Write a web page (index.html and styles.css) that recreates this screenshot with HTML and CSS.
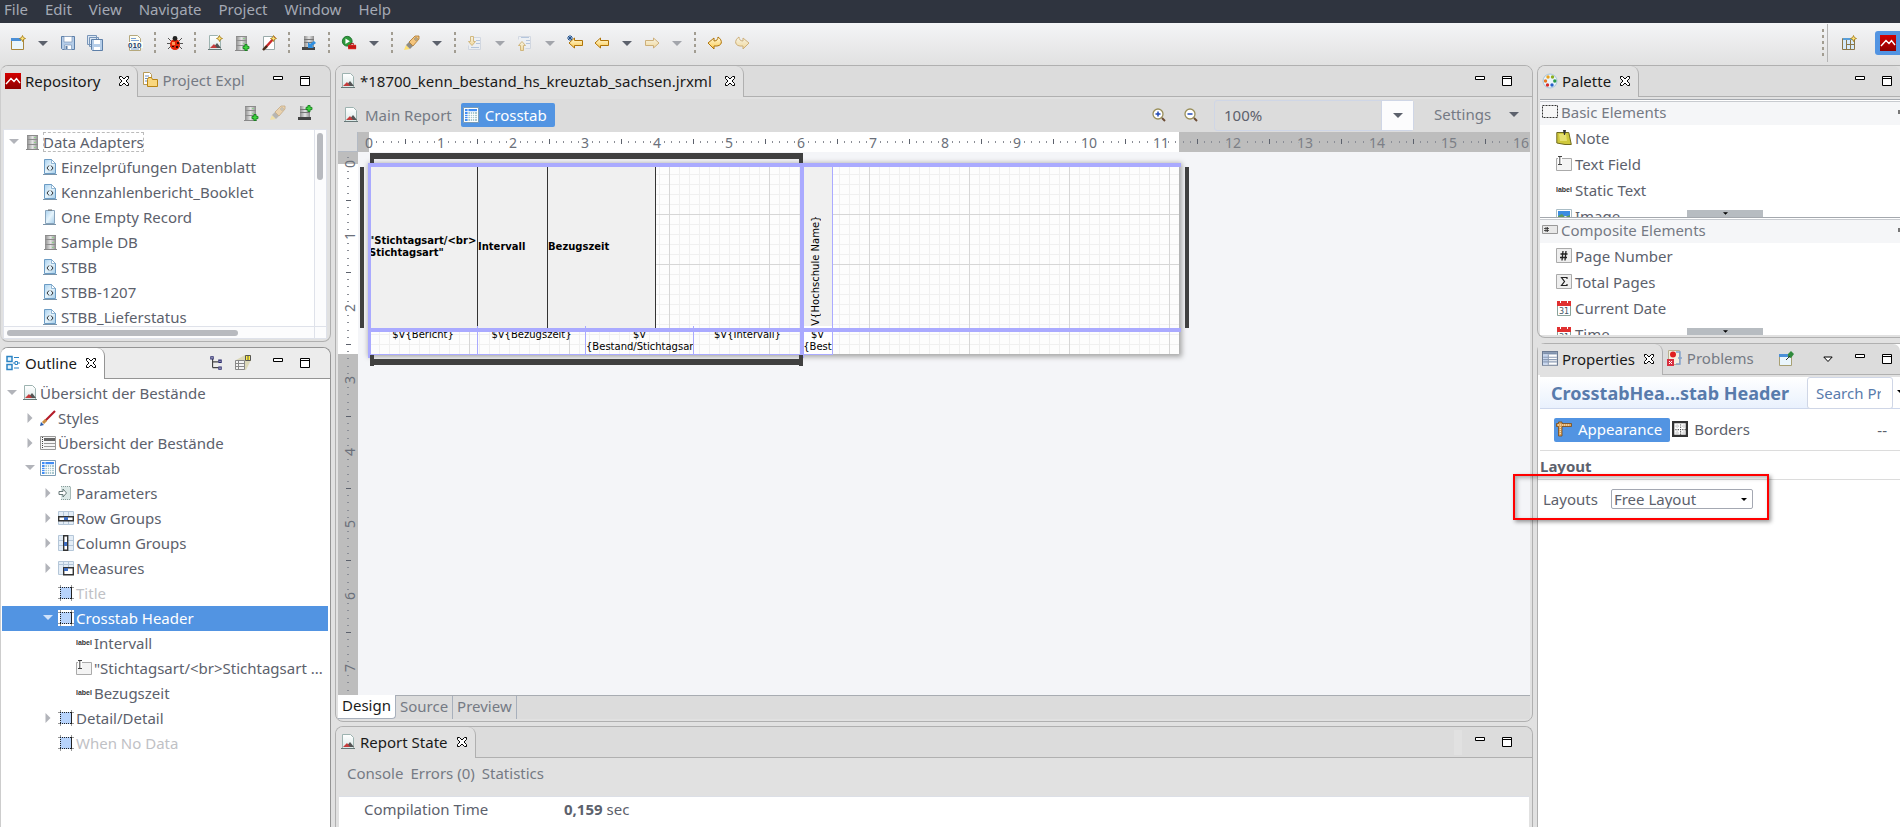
FILE: index.html
```html
<!DOCTYPE html>
<html lang="en">
<head>
    <meta charset="UTF-8">
    <meta name="viewport" content="width=device-width, initial-scale=1.0">
    <title>18700_kenn_bestand_hs_kreuztab_sachsen.jrxml</title>
    <link rel="stylesheet" href="styles.css">
</head>
<body>

<!-- icon set -->
<svg class="sprite" aria-hidden="true">
    <defs>
        <linearGradient id="gold" x1="0" y1="0" x2="0" y2="1"><stop offset="0" stop-color="#fffbe0"/><stop offset="1" stop-color="#fbc94c"/></linearGradient>
        <linearGradient id="steel" x1="0" y1="0" x2="1" y2="0"><stop offset="0" stop-color="#8c8c8c"/><stop offset=".5" stop-color="#e4e4e4"/><stop offset="1" stop-color="#8c8c8c"/></linearGradient>
        <linearGradient id="sheet" x1="0" y1="0" x2="0" y2="1"><stop offset="0" stop-color="#fff"/><stop offset="1" stop-color="#dbe9e8"/></linearGradient>
        <linearGradient id="sky" x1="0" y1="0" x2="1" y2="1"><stop offset="0" stop-color="#a8d0ee"/><stop offset=".5" stop-color="#e6f4fc"/><stop offset="1" stop-color="#a4cce8"/></linearGradient>
        <linearGradient id="red" x1="0" y1="0" x2="0" y2="1"><stop offset="0" stop-color="#d40000"/><stop offset="1" stop-color="#8e0000"/></linearGradient>
    </defs>
    <symbol id="i-jasper" viewBox="0 0 16 16"><path fill="url(#red)" d="M0 0h16v16H0z"/><path fill="none" stroke="#fff" stroke-width="1.400" d="M1 11l5-5.500 3 3 2.500-3L15 10"/></symbol>
    <symbol id="i-close" viewBox="0 0 12 12"><path fill="#fff" stroke="#000" d="M1.500 1.500h2L6 4l2.500-2.500h2v2L8 6l2.500 2.500v2h-2L6 8l-2.500 2.500h-2v-2L4 6 1.500 3.500z"/></symbol>
    <symbol id="i-min" viewBox="0 0 10 11"><path fill="#fff" stroke="#000" d="M.5.5h9v3h-9z"/></symbol>
    <symbol id="i-max" viewBox="0 0 10 11"><path fill="#fff" stroke="#000" d="M.5.5h9v9h-9zM.5 2.500h9"/></symbol>
    <symbol id="i-down" viewBox="0 0 10 5"><path fill="currentColor" d="M0 0h10L5 5z"/></symbol>
    <symbol id="i-right" viewBox="0 0 5 10"><path fill="currentColor" d="M0 0v10l5-5z"/></symbol>
    <symbol id="i-menu" viewBox="0 0 10 6"><path fill="#fff" stroke="#000" d="M.8.5h8.400L5 5z"/></symbol>
    <symbol id="i-star" viewBox="0 0 7 7"><path fill="#ffe680" stroke="#a57a10" stroke-width=".8" d="M3.500.5l.9 2.100 2.100.9-2.100.9-.9 2.100-.9-2.100L.5 3.500l2.100-.9z"/></symbol>
    <symbol id="i-plus" viewBox="0 0 7 7"><path fill="#3fd63f" stroke="#0c7a14" stroke-width=".8" d="M2.400.5h2.200v1.900h1.900v2.200H4.600v1.900H2.400V4.600H.5V2.400h1.900z"/></symbol>
    <symbol id="i-new" viewBox="0 0 16 16"><path fill="#eaf6fd" stroke="#a8863c" d="M1.500 3.500h12v11h-12z"/><path fill="#4c8fd6" d="M1 3h10v3H1z"/><use href="#i-star" x="9" width="7" height="7"/></symbol>
    <symbol id="i-save" viewBox="0 0 16 16"><path fill="#b5cde8" stroke="#5d7fa8" d="M1.500 1.500h13v13h-12l-1-1z"/><path fill="#fff" stroke="#7d97b8" stroke-width=".7" d="M4 1.500h8v5.500H4zM4.500 10h7v4.500h-7z"/><path fill="#5d7fa8" d="M5.500 11h2v3h-2z"/></symbol>
    <symbol id="i-saveall" viewBox="0 0 16 16"><path fill="#dbe7f4" stroke="#7895b8" d="M.5.500h9v9h-9zM2.500 2.500h9v9h-9z"/><path fill="#b5cde8" stroke="#5d7fa8" d="M4.500 4.500h11v11h-10l-1-1z"/><path fill="#fff" d="M7 5h6v4H7zM7 12h6v3H7z"/></symbol>
    <symbol id="i-binary" viewBox="0 0 16 16"><path fill="#fdfdf4" stroke="#b5a87c" d="M2.500.5h8l3 3v12h-11z"/><path stroke="#7ba2d4" d="M4 3.500h5M4 5.500h8M4 14h8"/><path fill="#fdfdf4" d="M1 7h15v6H1z"/><text x="1" y="13" font-size="8" font-weight="bold" fill="#1c3f6e" font-family="Liberation Sans, sans-serif">010</text></symbol>
    <symbol id="i-bug" viewBox="0 0 16 16"><path fill="none" stroke="#555" d="M1 3l3 3M15 3l-3 3M0 8.500h4M16 8.500h-4M1 14l3-3M15 14l-3-3"/><ellipse cx="8" cy="9.500" rx="5" ry="5.500" fill="#e3260a"/><circle cx="8" cy="3.500" r="2.400" fill="#222"/><path fill="#ff9a5a" d="M5 7h3v3H5z"/><path fill="#2c0a04" d="M10 7h2v2h-2zM9 11h2v2H9zM5 11h2v1H5z"/></symbol>
    <symbol id="i-report" viewBox="0 0 16 16"><path fill="url(#sheet)" stroke="#9db3b0" d="M2.500.5h8l3 3v11h-11z"/><path fill="#555" d="M6 13l4-5 4 5z"/><path fill="#c43c3c" d="M3 13l4-4 3 4z"/><path stroke="#677" d="M1 14.500h14"/></symbol>
    <symbol id="i-newreport" viewBox="0 0 16 16"><use href="#i-report" width="16" height="16"/><use href="#i-star" x="9" width="7" height="7"/></symbol>
    <symbol id="i-db" viewBox="0 0 16 16"><path fill="url(#steel)" d="M3 1h11v14H3z"/><path stroke="#8c8c8c" d="M3 5.500h11M3 10.500h11M3 1.500h11"/><path fill="#8fd08a" d="M10 3h2v1h-2zM10 8h2v1h-2zM10 13h2v1h-2z"/><path stroke="#888" d="M2 15.500h13"/></symbol>
    <symbol id="i-dbadd" viewBox="0 0 16 16"><use href="#i-db" x="-1" width="16" height="16"/><use href="#i-plus" x="8" y="9" width="8" height="7"/></symbol>
    <symbol id="i-wand" viewBox="0 0 16 16"><path fill="#fff" stroke="#9aa" d="M2.500 1.500h11v13h-11z"/><path stroke="#c92a2a" stroke-width="2.400" d="M4 13L14 2"/><path stroke="#4a2b18" stroke-width="2.400" d="M2 15l4-4"/><use href="#i-star" x="9" width="7" height="7"/></symbol>
    <symbol id="i-server" viewBox="0 0 16 16"><path fill="url(#steel)" d="M3 1h10v11H3z"/><path stroke="#777" d="M3 4.500h10M3 7.500h10"/><path fill="#444" d="M1 12h13v3H1z"/></symbol>
    <symbol id="i-deploy" viewBox="0 0 16 16"><use href="#i-server" width="16" height="16"/><path fill="#2f8fe0" d="M7 7v6h6l-2-2 4-3-2-2-4 3z"/></symbol>
    <symbol id="i-serveradd" viewBox="0 0 16 16"><use href="#i-server" width="16" height="16"/><use href="#i-plus" x="8" width="8" height="7"/></symbol>
    <symbol id="i-run" viewBox="0 0 18 16"><circle cx="7" cy="6" r="5.500" fill="#2f9a3c" stroke="#1b6c2b"/><path fill="#fff" d="M5 3l5 3-5 3z"/><path fill="#d8201c" d="M8 10h9v5H8z"/><path fill="none" stroke="#a01010" d="M11 10V8.500h3V10M8 12.500h9"/></symbol>
    <symbol id="i-rocket" viewBox="0 0 16 16"><path fill="#ffe070" d="M0 15l2-5 4 4z"/><path fill="#8d8b86" d="M2 10l3-3 4 4-3 3z"/><path fill="#f4c47c" stroke="#a8752c" stroke-width=".8" d="M5 7l6-6h4v3L9 11z"/><circle cx="12" cy="4" r="1.200" fill="#fff" stroke="#875"/></symbol>
    <symbol id="i-nextnote" viewBox="0 0 16 16"><path fill="#eef3f9" stroke="#b9c4d6" d="M6.500 2.500h7v12h-12v-4"/><path stroke="#7ea0cc" d="M9 5.500h4M9 8.500h4M4 12.500h8"/><path fill="url(#gold)" stroke="#b98413" d="M3.500 1.500h3v5h2L5 10.500 1.500 6.500h2z"/></symbol>
    <symbol id="i-prevnote" viewBox="0 0 16 16"><path fill="#eef3f9" stroke="#b9c4d6" d="M1.500 4.500v-3h12v12h-5"/><path stroke="#7ea0cc" d="M4 2.500h8M9 5.500h4M9 8.500h4"/><path fill="url(#gold)" stroke="#b98413" d="M3.500 15.500h3v-5h2L5 6.500 1.500 10.500h2z"/></symbol>
    <symbol id="i-back" viewBox="0 0 16 16"><path fill="url(#gold)" stroke="#b07408" d="M1 8l5.500-5v2.500h8v5h-8V13z"/></symbol>
    <symbol id="i-lastedit" viewBox="0 0 16 16"><use href="#i-back" x="1" width="16" height="16"/><path stroke="#1d4f8c" d="M3 0v6M0 3h6M1 1l4 4M5 1L1 5"/></symbol>
    <symbol id="i-forward" viewBox="0 0 16 16"><path fill="url(#gold)" stroke="#b07408" d="M15 8L9.500 3v2.500h-8v5h8V13z"/></symbol>
    <symbol id="i-undo" viewBox="0 0 16 16"><path fill="url(#gold)" stroke="#b07408" d="M1 8l6-5v3c3 0 4-2 4-4 5 3 5 10-4 9v3z"/></symbol>
    <symbol id="i-redo" viewBox="0 0 16 16"><path fill="url(#gold)" stroke="#b07408" d="M15 8L9 3v3C6 6 5 4 5 2c-5 3-5 10 4 9v3z"/></symbol>
    <symbol id="i-persp" viewBox="0 0 16 16"><path fill="#d6eafa" stroke="#8a7648" d="M1.500 3.500h12v11h-12z"/><path fill="#5a9fd8" d="M2 3h11v2H2z"/><path stroke="#8a7648" d="M5.500 5v9M5.500 9.500h8M9.500 5v9"/><use href="#i-star" x="9" width="7" height="7"/></symbol>
    <symbol id="i-project" viewBox="0 0 16 16"><path fill="#fff" stroke="#b89a55" d="M1.500.5h6l2 2v10h-8z"/><path stroke="#6f8fc0" d="M3 4h4M3 6.500h3M3 9h2"/><path fill="#f9d77e" stroke="#b98413" d="M5.500 7.500l1-2h3l1 2h5v7h-10z"/></symbol>
    <symbol id="i-xml" viewBox="0 0 16 16"><path fill="url(#sky)" stroke="#6c9cc4" d="M2.500.5h7l4 4v10h-11z"/><path fill="#fff" stroke="#6c9cc4" stroke-width=".7" d="M9.500.5v4h4z"/><path fill="none" stroke="#333" d="M7 6.500L5 9l2 2.500M9 6.500L11 9l-2 2.500"/><path stroke="#7a93a8" d="M1 15.500h14"/></symbol>
    <symbol id="i-clip" viewBox="0 0 16 16"><path fill="url(#sky)" stroke="#88a4bc" d="M3.500 1.500h9v13h-9z"/><path stroke="#666" d="M6 1h4"/><path stroke="#7a93a8" d="M1 15.500h13"/></symbol>
    <symbol id="i-outline" viewBox="0 0 14 16"><path fill="#e8f5fd" stroke="#2c84c4" stroke-width="1.500" d="M1 1.500h5v5H1zM1 9.500h5v5H1z"/><path stroke="#2c84c4" stroke-width="1.200" d="M8 2.500h5M8 13h5M7 8h2M12 8h2"/><path fill="none" stroke="#2c84c4" d="M9 6.500h2.500v3H9z"/></symbol>
    <symbol id="i-hier" viewBox="0 0 12 14"><path fill="none" stroke="#444" d="M3 3v8M3 6H8M3 11H8"/><path fill="#fff" stroke="#28286c" d="M1.500 1.500h2v2h-2zM8.500 4.500h2v2h-2zM8.500 10.500h2v2h-2z"/></symbol>
    <symbol id="i-group" viewBox="0 0 16 16"><path fill="#dcd8b8" d="M1 5l9-5h6v5l-5 10H1z"/><path fill="#f4f4f4" stroke="#888" d="M.5 5.500h9v9h-9z"/><path stroke="#888" d="M1 8.500h8M1 11.500h8M3.500 6v8"/><path fill="#ffee3c" stroke="#555" d="M10.500.5h5v5h-5zM13 .5v5"/></symbol>
    <symbol id="i-brush" viewBox="0 0 16 16"><path stroke="#b41c28" stroke-width="2.200" d="M5.500 10.500L15 1"/><path stroke="#c98c40" stroke-width="3" d="M3 13l3-3"/><path fill="#2d5ca8" d="M0 16l1-4 3 3z"/></symbol>
    <symbol id="i-band" viewBox="0 0 16 16"><path fill="#f6f6f6" stroke="#999" d="M.5 1.500h15v13H.5z"/><path fill="#666" d="M4 3h11v3H4z"/><path stroke="#999" d="M4 8.500h11M4 11.500h11"/><path stroke="#444" stroke-dasharray="1 1" d="M2.500 2v12"/></symbol>
    <symbol id="i-crosstab" viewBox="0 0 16 16"><path fill="#fff" stroke="#7c9cb4" d="M.5.5h15v15H.5z"/><path fill="#3f8df5" d="M2 2h12v3H5v9H2z"/><path fill="#a9c8ce" d="M5 5h9v9H5z"/><path stroke="#fff" stroke-width=".8" d="M2 4.500h12M2 7.500h12M2 9.500h12M2 11.500h12M5 2v12M7.500 5v9M9.500 5v9M11.500 5v9"/></symbol>
    <symbol id="i-param" viewBox="0 0 16 16"><path fill="#dbe8e6" d="M3 1h10v14H3z"/><path fill="none" stroke="#8a9c9a" stroke-dasharray="1 1" d="M3 1.500h10M3 14.500h10"/><path stroke="#a8bab8" d="M12.500 2v12"/><path fill="#fff" stroke="#677" d="M1 6.500h4V4l3.500 4L5 12V9.500H1z"/></symbol>
    <symbol id="i-rows" viewBox="0 0 16 16"><path fill="#e4edf6" stroke="#b4c6d8" d="M.5 1.500h15v13H.5zM5.500 1v13M10.500 1v13"/><path fill="#fff" stroke="#333" stroke-width="1.400" d="M.7 6.700h14.600v4H.7z"/><path fill="#3c6cc0" d="M6 7h4v3H6z"/></symbol>
    <symbol id="i-cols" viewBox="0 0 16 16"><path fill="#e4edf6" stroke="#b4c6d8" d="M.5 .5h15v15H.5zM1 5.500h14M1 10.500h14"/><path fill="#fff" stroke="#333" stroke-width="1.400" d="M5.700.7h4v14.600h-4z"/><path fill="#3c6cc0" d="M6 7h3v4H6z"/></symbol>
    <symbol id="i-measure" viewBox="0 0 16 16"><path fill="#e4edf6" stroke="#b4c6d8" d="M.5 1.500h15v13H.5zM5.500 1v13M10.500 1v13M1 4.500h14"/><path fill="#fff" stroke="#333" stroke-width="1.400" d="M5.700 7.700h9.600v7H5.700z"/><path fill="#3c6cc0" d="M6 8h4v3H6z"/></symbol>
    <symbol id="i-cell" viewBox="0 0 16 16"><path fill="#fff" d="M0 0h16v16H0z"/><path stroke="#999" d="M0 2.500h16M0 13.500h16M2.500 0v16M13.500 0v16"/><path fill="#b8d4fc" d="M2 2h12v12H2z"/><path fill="none" stroke="#222" stroke-dasharray="1 1" d="M2 2.500h12M2 13.500h12M2.500 2v12"/><path stroke="#222" d="M13.500 2v12"/></symbol>
    <symbol id="i-label" viewBox="0 0 16 16"><text x="0" y="10" font-size="7" fill="#333" font-weight="bold" font-family="Liberation Sans, sans-serif">label</text></symbol>
    <symbol id="i-field" viewBox="0 0 16 16"><path fill="#f4f4f4" stroke="#aaa" d="M.5 2.500h15v12H.5z"/><path fill="#fff" d="M2 0h4v9H2z"/><path fill="none" stroke="#444" d="M2 .5h4M2 8.500h4M3.800 0v9"/></symbol>
    <symbol id="i-zoomin" viewBox="0 0 14 14"><circle cx="6" cy="6" r="5" fill="#fff" stroke="#9a8f5a" stroke-width="1.300"/><path stroke="#6c4c34" stroke-width="2" d="M10 10l3 3"/><path stroke="#2148b4" stroke-width="1.500" d="M3.500 6h5M6 3.500v5"/></symbol>
    <symbol id="i-zoomout" viewBox="0 0 14 14"><circle cx="6" cy="6" r="5" fill="#fff" stroke="#9a8f5a" stroke-width="1.300"/><path stroke="#6c4c34" stroke-width="2" d="M10 10l3 3"/><path stroke="#2148b4" stroke-width="1.500" d="M3.500 6h5"/></symbol>
    <symbol id="i-palette" viewBox="0 0 16 16"><circle cx="8" cy="8" r="7" fill="#e9f4fb" stroke="#a8c4d8"/><circle cx="6" cy="4" r="1.700" fill="#e8a020"/><circle cx="10.500" cy="4" r="1.700" fill="#8cae20"/><circle cx="3.500" cy="8" r="1.700" fill="#e87820"/><circle cx="12.800" cy="8" r="1.700" fill="#289a48"/><circle cx="5.500" cy="12" r="1.700" fill="#d82c2c"/><circle cx="10" cy="12" r="1.700" fill="#2860c8"/></symbol>
    <symbol id="i-drawer" viewBox="0 0 16 14"><path fill="#f7f7f7" stroke="#333" stroke-dasharray="2 1" d="M.5.5h15v12H.5z"/></symbol>
    <symbol id="i-comp" viewBox="0 0 16 14"><path fill="#e8e8e8" stroke="#999" d="M.5 2.500h15v8H.5z"/><path stroke="#333" stroke-width=".8" d="M2 5.500h5M2 7.500h5M4 4v5M5.500 4v5"/></symbol>
    <symbol id="i-note" viewBox="0 0 16 16"><path fill="#cfc83c" stroke="#6f6a20" d="M.8 2.500h12l2.500 12H9L.8 13z"/><path fill="#e6e070" d="M3 4h7l1 7H4z"/><path fill="#333" d="M7 0h3l-1 5H8z"/></symbol>
    <symbol id="i-image" viewBox="0 0 16 16"><path fill="#fff" stroke="#aabdc6" d="M.5 1.500h15v13H.5z"/><path fill="#3c8ce0" d="M2 3h12v5H2z"/><path fill="#5f9a5c" d="M2 8l4-2 3 3 5-2v6H2z"/></symbol>
    <symbol id="i-hash" viewBox="0 0 16 16"><path fill="#eee" stroke="#aaa" d="M.5.5h15v14H.5z"/><path stroke="#222" stroke-width="1.300" d="M4.500 6h7M4 9.500h7M7 3L6 12.500M10 3L9 12.500"/></symbol>
    <symbol id="i-sum" viewBox="0 0 16 16"><path fill="#eee" stroke="#aaa" d="M.5.5h15v14H.5z"/><path fill="none" stroke="#222" stroke-width="1.200" d="M11 5V3.500H5.500l3 4-3 4H11V10"/></symbol>
    <symbol id="i-date" viewBox="0 0 16 16"><path fill="#fff" stroke="#8aa39a" d="M1.500 2.500h13v13h-13z"/><path fill="#e03030" d="M1 1h14v5H1z"/><path stroke="#fff" d="M4.500 0v3M11.500 0v3"/><text x="3" y="14" font-size="8" fill="#456" font-family="DejaVu Sans, sans-serif">31</text></symbol>
    <symbol id="i-props" viewBox="0 0 14 14"><path fill="#fff" stroke="#6d7c94" d="M.5.5h13v12H.5z"/><path fill="#7d90ac" d="M1 1h12v2H1z"/><path fill="#c6d6f0" d="M1 3h4v9H1z"/><path stroke="#8c9cb4" d="M1 5.500h12M1 7.500h12M1 9.500h12M5.500 3v9"/></symbol>
    <symbol id="i-problems" viewBox="0 0 16 16"><path fill="#f4f0e0" stroke="#b8b090" d="M1.500.5h11v14h-11z"/><circle cx="6" cy="4.500" r="3" fill="#e02020"/><path fill="none" stroke="#86a4cc" stroke-width="1.500" d="M9 2h4v12h-4M11 8h4"/><path fill="#d83040" d="M0 9h7v7H0z"/><path stroke="#fff" d="M2 11l3 3M5 11l-3 3"/></symbol>
    <symbol id="i-pin" viewBox="0 0 16 16"><path fill="#eaf6fd" stroke="#a8a074" d="M1.500 3.500h12v11h-12z"/><path fill="#4c8fd6" d="M1 3h9v3H1z"/><path fill="#2f8a3c" d="M10 3l3-3 3 3-3 4-3-1z"/><path stroke="#333" d="M8 9l4-4"/></symbol>
    <symbol id="i-appear" viewBox="0 0 16 16"><path fill="#dba35c" stroke="#7a4a18" stroke-width=".8" d="M2.500 1H6v1.500h9.500v3H6V15H2.500V5.500H.5v-3h2z"/><path stroke="#fff3cf" stroke-dasharray="1 1" d="M2 4h12M4.300 6v8"/></symbol>
    <symbol id="i-borders" viewBox="0 0 14 14"><path fill="#fff" stroke="#333" stroke-width="2" d="M1 1h12v12H1z"/><path stroke="#444" stroke-dasharray="1 1" d="M3 7.500h9M7.500 3v9"/><path stroke="#bbb" stroke-dasharray="1 1" d="M3 4.500h9M4.500 3v9M3 10.500h9M10.500 3v9"/></symbol>
</svg>

<nav class="menubar">
    <a href="#">File</a>
    <a href="#">Edit</a>
    <a href="#">View</a>
    <a href="#">Navigate</a>
    <a href="#">Project</a>
    <a href="#">Window</a>
    <a href="#">Help</a>
</nav>

<div class="toolbar">
    <button class="tool" aria-label="New"><svg><use href="#i-new"/></svg></button>
    <button class="drop" aria-label="New menu"><svg><use href="#i-down"/></svg></button>
    <button class="tool" aria-label="Save"><svg><use href="#i-save"/></svg></button>
    <button class="tool" aria-label="Save all"><svg><use href="#i-saveall"/></svg></button>
    <span class="gap"></span>
    <button class="tool" aria-label="Binary"><svg><use href="#i-binary"/></svg></button>
    <span class="sep"></span>
    <button class="tool" aria-label="Debug"><svg><use href="#i-bug"/></svg></button>
    <span class="sep"></span>
    <button class="tool" aria-label="New report"><svg><use href="#i-newreport"/></svg></button>
    <button class="tool" aria-label="New data adapter"><svg><use href="#i-dbadd"/></svg></button>
    <button class="tool" aria-label="Style wizard"><svg><use href="#i-wand"/></svg></button>
    <span class="sep"></span>
    <button class="tool" aria-label="Deploy"><svg><use href="#i-deploy"/></svg></button>
    <span class="sep"></span>
    <button class="tool" aria-label="Run"><svg><use href="#i-run"/></svg></button>
    <button class="drop" aria-label="Run menu"><svg><use href="#i-down"/></svg></button>
    <span class="sep"></span>
    <button class="tool" aria-label="External tools"><svg><use href="#i-rocket"/></svg></button>
    <button class="drop" aria-label="External tools menu"><svg><use href="#i-down"/></svg></button>
    <span class="sep"></span>
    <button class="tool off" aria-label="Next annotation"><svg><use href="#i-nextnote"/></svg></button>
    <button class="drop off" aria-label="Next menu"><svg><use href="#i-down"/></svg></button>
    <button class="tool off" aria-label="Previous annotation"><svg><use href="#i-prevnote"/></svg></button>
    <button class="drop off" aria-label="Previous menu"><svg><use href="#i-down"/></svg></button>
    <button class="tool" aria-label="Last edit"><svg><use href="#i-lastedit"/></svg></button>
    <button class="tool" aria-label="Back"><svg><use href="#i-back"/></svg></button>
    <button class="drop" aria-label="Back menu"><svg><use href="#i-down"/></svg></button>
    <button class="tool off" aria-label="Forward"><svg><use href="#i-forward"/></svg></button>
    <button class="drop off" aria-label="Forward menu"><svg><use href="#i-down"/></svg></button>
    <span class="sep"></span>
    <button class="tool" aria-label="Undo"><svg><use href="#i-undo"/></svg></button>
    <button class="tool off" aria-label="Redo"><svg><use href="#i-redo"/></svg></button>
    <div class="perspectives">
        <span class="sep"></span>
        <button class="tool" aria-label="Open perspective"><svg><use href="#i-persp"/></svg></button>
        <button class="tool current" aria-label="Report design"><svg><use href="#i-jasper"/></svg></button>
    </div>
</div>

<main class="workbench">
    <div class="side">
        <section class="pane repository">
            <div class="tabs">
                <div class="tab active"><svg class="icon"><use href="#i-jasper"/></svg>Repository<button class="close" aria-label="Close"><svg><use href="#i-close"/></svg></button></div>
                <div class="tab"><svg class="icon"><use href="#i-project"/></svg>Project Expl</div>
                <div class="controls">
                    <button aria-label="Minimize"><svg><use href="#i-min"/></svg></button>
                    <button aria-label="Maximize"><svg><use href="#i-max"/></svg></button>
                </div>
            </div>
            <div class="viewbar">
                <button class="tool" aria-label="Create adapter"><svg><use href="#i-dbadd"/></svg></button>
                <button class="tool off" aria-label="Launch"><svg><use href="#i-rocket"/></svg></button>
                <button class="tool" aria-label="Add server"><svg><use href="#i-serveradd"/></svg></button>
            </div>
            <div class="treebox">
                <ul class="tree repo-tree">
                    <li><svg class="arrow open"><use href="#i-down"/></svg><svg class="icon"><use href="#i-db"/></svg><span class="focus">Data Adapters</span></li>
                    <li class="l1"><svg class="icon"><use href="#i-xml"/></svg><span>Einzelprüfungen Datenblatt</span></li>
                    <li class="l1"><svg class="icon"><use href="#i-xml"/></svg><span>Kennzahlenbericht_Booklet</span></li>
                    <li class="l1"><svg class="icon"><use href="#i-clip"/></svg><span>One Empty Record</span></li>
                    <li class="l1"><svg class="icon"><use href="#i-db"/></svg><span>Sample DB</span></li>
                    <li class="l1"><svg class="icon"><use href="#i-xml"/></svg><span>STBB</span></li>
                    <li class="l1"><svg class="icon"><use href="#i-xml"/></svg><span>STBB-1207</span></li>
                    <li class="l1"><svg class="icon"><use href="#i-xml"/></svg><span>STBB_Lieferstatus</span></li>
                </ul>
                <div class="vscroll"><i></i></div>
                <div class="hscroll"><i></i></div>
                <div class="corner"></div>
            </div>
        </section>

        <section class="pane outline">
            <div class="tabs">
                <div class="tab active"><svg class="icon"><use href="#i-outline"/></svg>Outline<button class="close" aria-label="Close"><svg><use href="#i-close"/></svg></button></div>
                <div class="controls">
                    <button aria-label="Tree"><svg class="icon"><use href="#i-hier"/></svg></button>
                    <button class="thumb" aria-label="Thumbnail"><svg class="icon"><use href="#i-group"/></svg></button>
                    <button aria-label="Minimize"><svg><use href="#i-min"/></svg></button>
                    <button aria-label="Maximize"><svg><use href="#i-max"/></svg></button>
                </div>
            </div>
            <ul class="tree">
                <li><svg class="arrow open"><use href="#i-down"/></svg><svg class="icon"><use href="#i-report"/></svg><span>Übersicht der Bestände</span></li>
                <li class="l1"><svg class="arrow"><use href="#i-right"/></svg><svg class="icon"><use href="#i-brush"/></svg><span>Styles</span></li>
                <li class="l1"><svg class="arrow"><use href="#i-right"/></svg><svg class="icon"><use href="#i-band"/></svg><span>Übersicht der Bestände</span></li>
                <li class="l1"><svg class="arrow open"><use href="#i-down"/></svg><svg class="icon"><use href="#i-crosstab"/></svg><span>Crosstab</span></li>
                <li class="l2"><svg class="arrow"><use href="#i-right"/></svg><svg class="icon"><use href="#i-param"/></svg><span>Parameters</span></li>
                <li class="l2"><svg class="arrow"><use href="#i-right"/></svg><svg class="icon"><use href="#i-rows"/></svg><span>Row Groups</span></li>
                <li class="l2"><svg class="arrow"><use href="#i-right"/></svg><svg class="icon"><use href="#i-cols"/></svg><span>Column Groups</span></li>
                <li class="l2"><svg class="arrow"><use href="#i-right"/></svg><svg class="icon"><use href="#i-measure"/></svg><span>Measures</span></li>
                <li class="l2 empty"><svg class="arrow"></svg><svg class="icon"><use href="#i-cell"/></svg><span>Title</span></li>
                <li class="l2 selected"><svg class="arrow open"><use href="#i-down"/></svg><svg class="icon"><use href="#i-cell"/></svg><span>Crosstab Header</span></li>
                <li class="l3"><svg class="arrow"></svg><svg class="icon"><use href="#i-label"/></svg><span>Intervall</span></li>
                <li class="l3"><svg class="arrow"></svg><svg class="icon"><use href="#i-field"/></svg><span>"Stichtagsart/&lt;br&gt;Stichtagsart ...</span></li>
                <li class="l3"><svg class="arrow"></svg><svg class="icon"><use href="#i-label"/></svg><span>Bezugszeit</span></li>
                <li class="l2"><svg class="arrow"><use href="#i-right"/></svg><svg class="icon"><use href="#i-cell"/></svg><span>Detail/Detail</span></li>
                <li class="l2 empty"><svg class="arrow"></svg><svg class="icon"><use href="#i-cell"/></svg><span>When No Data</span></li>
            </ul>
        </section>
    </div>

    <div class="center">
        <section class="pane editor">
            <div class="tabs">
                <div class="tab active"><svg class="icon"><use href="#i-report"/></svg>*18700_kenn_bestand_hs_kreuztab_sachsen.jrxml<button class="close" aria-label="Close"><svg><use href="#i-close"/></svg></button></div>
                <div class="controls">
                    <button aria-label="Minimize"><svg><use href="#i-min"/></svg></button>
                    <button aria-label="Maximize"><svg><use href="#i-max"/></svg></button>
                </div>
            </div>
            <div class="editbar">
                <button class="crumb"><svg class="icon"><use href="#i-report"/></svg>Main Report</button>
                <button class="crumb current"><svg class="icon"><use href="#i-crosstab"/></svg>Crosstab</button>
                <div class="zoom">
                    <button aria-label="Zoom in"><svg><use href="#i-zoomin"/></svg></button>
                    <button aria-label="Zoom out"><svg><use href="#i-zoomout"/></svg></button>
                    <div class="combo">
                        <input type="text" value="100%" aria-label="Zoom level">
                        <button aria-label="Zoom list"><svg><use href="#i-down"/></svg></button>
                    </div>
                    <button class="settings">Settings<svg><use href="#i-down"/></svg></button>
                </div>
            </div>
            <div class="design">
                <div class="ruler-corner"></div>
                <svg class="ruler-h">
                    <defs>
                        <pattern id="hticks" x="11" width="72" height="20" patternUnits="userSpaceOnUse">
                            <path stroke="#8b8e96" d="M7.500 9v2M14.500 9v2M22.500 9v2M29.500 9v2M43.500 9v2M50.500 9v2M58.500 9v2M65.500 9v2"/>
                            <path stroke="#5c616c" d="M36.500 7v5"/>
                        </pattern>
                    </defs>
                    <rect x="12" width="100%" height="20" fill="url(#hticks)"/>
                    <g class="in">
                        <text x="11" y="16">0</text><text x="83" y="16">1</text><text x="155" y="16">2</text><text x="227" y="16">3</text>
                        <text x="299" y="16">4</text><text x="371" y="16">5</text><text x="443" y="16">6</text><text x="515" y="16">7</text>
                        <text x="587" y="16">8</text><text x="659" y="16">9</text><text x="731" y="16">10</text><text x="803" y="16">11</text>
                    </g>
                    <g class="out">
                        <text x="875" y="16">12</text><text x="947" y="16">13</text><text x="1019" y="16">14</text><text x="1091" y="16">15</text><text x="1163" y="16">16</text>
                    </g>
                </svg>
                <svg class="ruler-v">
                    <defs>
                        <pattern id="vticks" y="12" width="20" height="72" patternUnits="userSpaceOnUse">
                            <path stroke="#8b8e96" d="M9 7.500h2M9 14.500h2M9 22.500h2M9 29.500h2M9 43.500h2M9 50.500h2M9 58.500h2M9 65.500h2"/>
                            <path stroke="#5c616c" d="M8 36.500h5"/>
                        </pattern>
                    </defs>
                    <rect width="20" height="100%" fill="url(#vticks)"/>
                    <g>
                        <text transform="translate(17 12) rotate(-90)">0</text><text transform="translate(17 84) rotate(-90)">1</text>
                        <text transform="translate(17 156) rotate(-90)">2</text><text transform="translate(17 228) rotate(-90)">3</text>
                        <text transform="translate(17 300) rotate(-90)">4</text><text transform="translate(17 372) rotate(-90)">5</text>
                        <text transform="translate(17 444) rotate(-90)">6</text><text transform="translate(17 516) rotate(-90)">7</text>
                    </g>
                </svg>
                <div class="canvas">
                    <div class="sheet">
                        <div class="cell head c1">"Stichtagsart/&lt;br&gt;<br>Stichtagsart"</div>
                        <div class="cell head c2">Intervall</div>
                        <div class="cell head c3">Bezugszeit</div>
                        <div class="cell colgroup"><span>$V{Hochschule Name}</span></div>
                        <div class="cell val v1">$V{Bericht}</div>
                        <div class="cell val v2">$V{Bezugszeit}</div>
                        <div class="cell val v3">$V<br>{Bestand/Stichtagsar</div>
                        <div class="cell val v4">$V{Intervall}</div>
                        <div class="cell val v5">$V<br>{Best</div>
                        <div class="line top"></div>
                        <div class="line mid"></div>
                        <div class="line left"></div>
                        <div class="line right"></div>
                    </div>
                    <div class="bar north"></div>
                    <div class="bar south"></div>
                    <div class="bar west"></div>
                    <div class="bar east"></div>
                </div>
            </div>
            <div class="pages">
                <button class="current">Design</button>
                <button>Source</button>
                <button>Preview</button>
            </div>
        </section>

        <section class="pane state">
            <div class="tabs">
                <div class="tab active"><svg class="icon"><use href="#i-report"/></svg>Report State<button class="close" aria-label="Close"><svg><use href="#i-close"/></svg></button></div>
                <div class="controls">
                    <span class="grip"></span>
                    <button aria-label="Minimize"><svg><use href="#i-min"/></svg></button>
                    <button aria-label="Maximize"><svg><use href="#i-max"/></svg></button>
                </div>
            </div>
            <div class="statebar">
                <button>Console</button>
                <button>Errors (0)</button>
                <button>Statistics</button>
            </div>
            <dl class="stats">
                <dt>Compilation Time</dt>
                <dd><b>0,159</b> sec</dd>
            </dl>
        </section>
    </div>

    <div class="side end">
        <section class="pane palette">
            <div class="tabs">
                <div class="tab active"><svg class="icon"><use href="#i-palette"/></svg>Palette<button class="close" aria-label="Close"><svg><use href="#i-close"/></svg></button></div>
                <div class="controls">
                    <button aria-label="Minimize"><svg><use href="#i-min"/></svg></button>
                    <button aria-label="Maximize"><svg><use href="#i-max"/></svg></button>
                </div>
            </div>
            <div class="drawer">
                <h2><svg class="icon"><use href="#i-drawer"/></svg>Basic Elements<i></i></h2>
                <ul>
                    <li><svg class="icon"><use href="#i-note"/></svg>Note</li>
                    <li><svg class="icon"><use href="#i-field"/></svg>Text Field</li>
                    <li><svg class="icon"><use href="#i-label"/></svg>Static Text</li>
                    <li><svg class="icon"><use href="#i-image"/></svg>Image</li>
                </ul>
                <button class="more" aria-label="Scroll down"><svg><use href="#i-down"/></svg></button>
            </div>
            <div class="drawer">
                <h2><svg class="icon"><use href="#i-comp"/></svg>Composite Elements<i></i></h2>
                <ul>
                    <li><svg class="icon"><use href="#i-hash"/></svg>Page Number</li>
                    <li><svg class="icon"><use href="#i-sum"/></svg>Total Pages</li>
                    <li><svg class="icon"><use href="#i-date"/></svg>Current Date</li>
                    <li><svg class="icon"><use href="#i-date"/></svg>Time</li>
                </ul>
                <button class="more" aria-label="Scroll down"><svg><use href="#i-down"/></svg></button>
            </div>
        </section>

        <section class="pane properties">
            <div class="tabs">
                <div class="tab active"><svg class="icon"><use href="#i-props"/></svg>Properties<button class="close" aria-label="Close"><svg><use href="#i-close"/></svg></button></div>
                <div class="tab"><svg class="icon"><use href="#i-problems"/></svg>Problems</div>
                <div class="controls">
                    <button class="pin" aria-label="Pin"><svg class="icon"><use href="#i-pin"/></svg></button>
                    <button class="wide" aria-label="View menu"><svg><use href="#i-menu"/></svg></button>
                    <button aria-label="Minimize"><svg><use href="#i-min"/></svg></button>
                    <button aria-label="Maximize"><svg><use href="#i-max"/></svg></button>
                </div>
            </div>
            <div class="prop-head">
                <h1>CrosstabHea...stab Header</h1>
                <input type="text" placeholder="Search Property" aria-label="Search property">
                <button aria-label="Search options"><svg><use href="#i-down"/></svg></button>
            </div>
            <div class="prop-tabs">
                <button class="crumb current"><svg class="icon"><use href="#i-appear"/></svg>Appearance</button>
                <button class="crumb"><svg class="icon"><use href="#i-borders"/></svg>Borders</button>
                <span>--</span>
            </div>
            <h2>Layout</h2>
            <div class="prop-row">
                <label for="layouts">Layouts</label>
                <div class="select">
                    <select id="layouts"><option>Free Layout</option></select>
                    <svg><use href="#i-down"/></svg>
                </div>
                <div class="marker"></div>
            </div>
        </section>
    </div>
</main>

</body>
</html>
```
FILE: styles.css
```css
*{
    box-sizing: border-box;
    margin: 0;
    padding: 0;
}

body{
    height: 100vh;
    display: flex;
    flex-direction: column;
    overflow: hidden;
    background: #e1e1e1;
    color: #5c616c;
    font-family: "Noto Sans", sans-serif;
    font-size: 15px;
    line-height: 20px;
}

button, input, select{
    font: inherit;
    color: inherit;
    background: none;
    border: none;
    outline: none;
}

ul{
    list-style: none;
}

.sprite{
    position: absolute;
    width: 0;
    height: 0;
    visibility: hidden;
}

.icon{
    width: 16px;
    height: 16px;
    flex: none;
}

/* menu and main toolbar */

.menubar{
    height: 23px;
    flex: none;
    display: flex;
    gap: 17px;
    padding: 0 4px;
    background: #2f343f;
    line-height: 19px;
}

.menubar a{
    color: #a4a9b4;
    text-decoration: none;
}

.toolbar{
    height: 42px;
    flex: none;
    display: flex;
    align-items: center;
    padding: 0 0 2px 4px;
    background: linear-gradient(#f4f5f7, #e1e1e1);
}

.tool, .drop{
    width: 27px;
    height: 24px;
    flex: none;
    display: flex;
    align-items: center;
    justify-content: center;
}

.tool svg{
    width: 16px;
    height: 16px;
}

.drop{
    width: 23px;
}

.drop svg{
    width: 10px;
    height: 5px;
}

.off{
    opacity: 0.5;
}

.gap{
    width: 13px;
}

.sep{
    width: 13px;
    height: 22px;
    background: repeating-linear-gradient(#a29d92 0 3px, transparent 3px 6px) center / 2px 100% no-repeat;
}

.perspectives{
    margin-left: auto;
    height: 38px;
    display: flex;
    align-items: center;
}

.perspectives .sep{
    height: 28px;
    margin-right: -2px;
}

.perspectives .tool{
    margin-left: 5px;
}

.perspectives .sep + .tool{
    height: 100%;
    width: 43px;
    margin-left: 0;
    border-left: 1px solid #b4b4b4;
}

.perspectives .current{
    width: 25px;
    background: #5294e2;
    border-radius: 3px 0 0 3px;
}

/* panes */

.workbench{
    flex: 1;
    min-height: 0;
    display: grid;
    grid-template-columns: 331px minmax(0, 1fr) 363px;
    column-gap: 4px;
}

.side, .center{
    min-height: 0;
    display: flex;
    flex-direction: column;
    gap: 5px;
}

.center{
    gap: 4px;
}

.pane{
    display: flex;
    flex-direction: column;
    border: 1px solid #b0b0b0;
    border-radius: 8px;
    overflow: hidden;
}

.side:first-child .pane{
    border-left-color: #cdcdcd;
}

.repository{
    height: 277px;
}

.side .outline{
    flex: 1;
    border-color: #949494;
    border-bottom: none;
    border-radius: 8px 8px 0 0;
    background: #fff;
}

.editor{
    flex: 1;
    min-height: 0;
}

.state{
    height: 101px;
    border-bottom: none;
    border-radius: 8px 8px 0 0;
}

.end .pane{
    border-right: none;
    border-radius: 8px 0 0 8px;
}

.palette{
    height: 273px;
}

.end .properties{
    flex: 1;
    min-height: 0;
    border-bottom: none;
    border-radius: 8px 0 0 0;
    overflow: visible;
}

.tabs{
    height: 31px;
    flex: none;
    display: flex;
    background: #dcdcdc;
    border-bottom: 1px solid #b0b0b0;
    border-radius: 7px 7px 0 0;
}

.tab{
    display: flex;
    align-items: center;
    gap: 4px;
    padding: 0 4px 2px;
    color: #757a84;
    white-space: nowrap;
}

.tab.active{
    height: 31px;
    background: #e1e1e1;
    color: #1a1a1a;
    border-right: 1px solid #b0b0b0;
    border-radius: 0 8px 0 0;
}

.close{
    width: 12px;
    height: 12px;
    margin: 0 3px 0 4px;
}

.close svg{
    display: block;
    width: 12px;
    height: 12px;
}

.repository .close{
    margin-left: 14px;
}

.editor .close{
    margin-left: 8px;
}

.controls{
    margin-left: auto;
    padding: 0 12px 0 0;
    display: flex;
    align-items: center;
}

.controls button{
    width: 27px;
    display: flex;
    justify-content: center;
}

.controls svg{
    width: 10px;
    height: 11px;
}

.controls .icon{
    width: 16px;
    height: 16px;
}

.controls .thumb{
    margin-right: 8px;
}

.end .controls{
    padding-right: 0;
}

.controls .wide{
    width: 37px;
}

.controls .pin{
    width: 46px;
}

.grip{
    width: 8px;
    height: 25px;
    margin-right: 4px;
    background: #e1e1e1;
}

.outline .tabs{
    background: #ececec;
    border-color: #949494;
}

.outline .tab.active{
    background: #fff;
    border-color: #949494;
}

/* trees */

.viewbar{
    height: 32px;
    flex: none;
    display: flex;
    align-items: center;
    justify-content: flex-end;
    padding-right: 12px;
}

.treebox{
    flex: 1;
    min-height: 0;
    margin: 0 3px 2px 2px;
    display: grid;
    grid-template: minmax(0, 1fr) 12px / minmax(0, 1fr) 12px;
    background: #fff;
    border: 1px solid #dfe2ea;
}

.tree{
    padding: 2px 2px 0 1px;
}

.tree li{
    height: 25px;
    display: flex;
    align-items: center;
    padding: 0 0 2px 5px;
    white-space: nowrap;
    overflow: hidden;
}

.treebox .tree{
    padding: 0;
    overflow: hidden;
}

.tree .icon{
    margin-right: 2px;
}

.repo-tree .icon{
    margin-right: 3px;
}

.tree .l1{ padding-left: 23px; }
.tree .l2{ padding-left: 41px; }
.tree .l3{ padding-left: 59px; }

.repo-tree .l1{
    padding-left: 38px;
}

.tree .arrow{
    width: 10px;
    height: 10px;
    flex: none;
    margin-right: 5px;
    color: #b2b4ba;
}

.tree .open{
    height: 5px;
}

.tree .focus{
    outline: 1px dashed #bbb;
    outline-offset: -1px;
}

.tree .empty{
    color: #bfc1c5;
}

.tree .selected{
    background: #5294e2;
    color: #fff;
}

.tree .selected .arrow{
    color: #cfe2fa;
}

.vscroll, .hscroll, .corner{
    background: #fcfcfd;
    border-left: 1px solid #dfe2ea;
}

.vscroll{
    padding: 3px 2px;
}

.vscroll i{
    display: block;
    height: 47px;
    width: 6px;
    border-radius: 3px;
    background: #b8babf;
}

.hscroll{
    padding: 3px;
    border-left: none;
    border-top: 1px solid #dfe2ea;
}

.hscroll i{
    display: block;
    width: 76%;
    height: 6px;
    border-radius: 3px;
    background: #b8babf;
}

.corner{
    border-top: 1px solid #dfe2ea;
}

/* editor */

.editbar{
    height: 33px;
    flex: none;
    margin: 2px 2px 0;
    display: flex;
    align-items: center;
    gap: 3px;
    padding-bottom: 1px;
    background: #dcdcdc;
}

.crumb{
    height: 24px;
    display: flex;
    align-items: center;
    gap: 6px;
    padding: 0 6px 1px 2px;
    border-radius: 2px;
    color: #757a84;
}

.editbar .crumb{
    padding-left: 5px;
}

.editbar .current{
    padding: 0 8px 1px 2px;
}

.crumb.current{
    background: #5294e2;
    color: #fff;
}

.zoom{
    margin-left: auto;
    height: 100%;
    display: flex;
    align-items: center;
}

.zoom > button{
    width: 32px;
}

.zoom > button svg{
    display: block;
    width: 14px;
    height: 14px;
    margin: 0 auto;
}

.combo{
    width: 200px;
    height: 31px;
    margin-left: 7px;
    display: flex;
    border: 1px solid #cfd6e6;
    border-radius: 3px;
}

.combo input{
    flex: 1;
    min-width: 0;
    padding: 0 0 1px 9px;
}

.combo button{
    width: 32px;
    background: #fcfcfd;
    border-left: 1px solid #cfd6e6;
}

.combo svg{
    display: block;
    width: 10px;
    height: 5px;
    margin: 0 auto;
}

.zoom .settings{
    width: 116px;
    display: flex;
    align-items: center;
    justify-content: space-between;
    padding: 0 11px 2px 20px;
    color: #757a84;
}

.zoom .settings svg{
    width: 10px;
    height: 5px;
    margin: 0;
    color: #5c616c;
}

.design{
    flex: 1;
    min-height: 0;
    margin: 0 2px;
    display: grid;
    grid-template: 20px minmax(0, 1fr) / 20px minmax(0, 1fr);
}

.ruler-corner{
    background: #dcdcdc;
    border: solid #b3bac4;
    border-width: 0 1px 1px 0;
}

.ruler-h{
    width: 100%;
    height: 20px;
    background: linear-gradient(to right, #bdbdbd 11px, #fff 11px 821px, #bdbdbd 821px);
}

.ruler-v{
    width: 20px;
    height: 100%;
    background: linear-gradient(#bdbdbd 12px, #fff 12px 202px, #bdbdbd 202px);
}

.ruler-h text, .ruler-v text{
    font-size: 14px;
    fill: #6b707a;
    text-anchor: middle;
}

.ruler-h .in text{
    stroke: #fff;
    stroke-width: 3px;
    paint-order: stroke;
}

.ruler-h .in text:first-child{
    stroke: none;
}

.ruler-h .out text{
    fill: #7c7f86;
    stroke: #bdbdbd;
    stroke-width: 3px;
    paint-order: stroke;
}

/* crosstab on the drawing canvas */

.canvas{
    position: relative;
    overflow: hidden;
    background: #f4f5f8;
}

.sheet{
    position: absolute;
    left: 11px;
    top: 12px;
    width: 810px;
    height: 190px;
    background:
        linear-gradient(#d6d6d6, #d6d6d6) 0 50px / 100% 1px no-repeat,
        linear-gradient(#d6d6d6, #d6d6d6) 0 100px / 100% 1px no-repeat,
        linear-gradient(to right, #d6d6d6 1px, transparent 1px) 0 0 / 100px 100%,
        linear-gradient(to right, #f0f0f0 1px, transparent 1px) 0 0 / 10px 10px,
        linear-gradient(#f0f0f0 1px, #fdfdfd 1px) 0 0 / 10px 10px;
    box-shadow: 1px 1px 5px 2px #a8a8a8;
    color: #000;
    font-family: "DejaVu Sans", sans-serif;
    font-size: 10px;
    line-height: 12px;
}

.cell{
    position: absolute;
    overflow: hidden;
    white-space: nowrap;
}

.head{
    top: 3px;
    height: 161px;
    display: flex;
    align-items: center;
    padding-bottom: 2px;
    background: #f0f0f0;
    border-right: 1px solid #333;
    font-weight: bold;
}

.c1{ left: 0; width: 109px; }
.c2{ left: 109px; width: 70px; }
.c3{ left: 179px; width: 108px; }

.colgroup{
    left: 435px;
    top: 3px;
    width: 29px;
    height: 161px;
    background: #f0f0f0;
    border-right: 1px solid #aaaaff;
}

.colgroup span{
    display: block;
    width: 24px;
    height: 165px;
    writing-mode: vertical-rl;
    transform: rotate(180deg);
    line-height: 24px;
}

.val{
    top: 162px;
    height: 29px;
    padding-top: 3px;
    text-align: center;
    border: solid #aaaaff;
    border-width: 0 1px 1px 0;
}

.v1{ left: 0; width: 109px; }
.v2{ left: 109px; width: 108px; }
.v3{ left: 217px; width: 108px; }
.v4{ left: 325px; width: 108px; }
.v5{ left: 434px; width: 30px; background: #fff; }

.line{
    position: absolute;
    background: #aaaaff;
}

.line.top{ left: -1px; top: -1px; width: 813px; height: 4px; }
.line.mid{ left: -1px; top: 164px; width: 813px; height: 4px; }
.line.left{ left: -1px; top: -1px; width: 3px; height: 195px; }
.line.right{ left: 431px; top: -1px; width: 4px; height: 195px; }

.bar{
    position: absolute;
    border: 0 solid #404040;
}

.bar::before{
    content: "";
    display: block;
    width: 100%;
    height: 6px;
    background: #404040;
}

.north, .south{
    left: 12px;
    width: 433px;
    height: 10px;
    border-width: 0 4px;
}

.north{ top: 1px; }

.south{
    top: 203px;
    height: 11px;
    padding-top: 4px;
}

.west, .east{
    top: 15px;
    width: 4px;
    height: 161px;
    background: #404040;
}

.west{ left: 2px; }
.east{ left: 827px; }

.pages{
    height: 24px;
    flex: none;
    margin: 0 2px 2px;
    display: flex;
    background: #dcdcdc;
    border-top: 1px solid #a8acb2;
}

.pages button{
    padding: 0 4px 3px;
    border-right: 1px solid #a8b0bc;
    color: #757a84;
}

.pages .current{
    margin-top: -1px;
    background: #fff;
    color: #1a1a1a;
    border-bottom: 1px solid #a8b0bc;
    border-radius: 0 0 4px 0;
}

/* report state */

.statebar{
    height: 38px;
    flex: none;
    display: flex;
    align-items: center;
    gap: 7px;
    padding: 0 11px 8px;
    color: #757a84;
}

.stats{
    flex: 1;
    margin: 0 3px;
    padding: 2px 25px;
    display: grid;
    grid-template-columns: 200px 1fr;
    background: #fff;
    border-top: 1px solid #dcdfe6;
}

/* palette */

.drawer{
    position: relative;
    height: 118px;
    margin: 2px 0 0 2px;
    flex: none;
    background: #fff;
    overflow: hidden;
    border-top: 1px solid #a4a8ae;
}

.drawer + .drawer{
    margin-top: 0;
}

.drawer h2{
    height: 24px;
    display: flex;
    align-items: center;
    gap: 3px;
    margin-top: 1px;
    padding: 0 0 3px 2px;
    background: #f5f6f8;
    border-top: 1px solid #c8cbd0;
    font-size: 15px;
    font-weight: normal;
    color: #757a84;
}

.drawer h2 i{
    width: 2px;
    height: 4px;
    margin-left: auto;
    background: #777;
}

.drawer li{
    height: 26px;
    display: flex;
    align-items: center;
    gap: 3px;
    padding-left: 16px;
    line-height: 26px;
}

.drawer .more{
    position: absolute;
    left: 147px;
    bottom: 0;
    width: 76px;
    height: 7px;
    background: #b7bcc1;
    color: #000;
}

.drawer .more svg{
    display: block;
    width: 5px;
    height: 3px;
    margin: 0 auto;
}

/* properties */

.properties{
    background: #fff;
}

.prop-head{
    height: 34px;
    flex: none;
    margin-left: 2px;
    padding-left: 11px;
    display: flex;
    align-items: center;
    background: linear-gradient(#fff, #e9f1fd);
    border-top: 2px solid #e1e1e1;
    border-bottom: 1px solid #cdd7ec;
}

.prop-head h1{
    flex: 1;
    font-size: 18px;
    color: #587bac;
    white-space: nowrap;
}

.prop-head input{
    width: 86px;
    height: 32px;
    padding: 0 11px 0 8px;
    background: #fff;
    border: 1px solid #cfd6e6;
    border-radius: 3px;
}

.prop-head input::placeholder{
    color: #587bac;
    opacity: 1;
}

.prop-head button{
    width: 7px;
    height: 30px;
    overflow: hidden;
    color: #000;
    background: #fff;
}

.prop-head svg{
    display: block;
    width: 10px;
    height: 5px;
    margin-left: 4px;
}

.prop-tabs{
    height: 42px;
    flex: none;
    display: flex;
    align-items: center;
    margin-left: 2px;
    padding: 0 13px 0 14px;
    border-bottom: 1px solid #dcdcdc;
}

.prop-tabs .crumb{
    color: #5c616c;
}

.prop-tabs .current{
    padding-right: 8px;
    color: #fff;
}

.prop-tabs span{
    margin-left: auto;
}

.properties h2{
    height: 29px;
    flex: none;
    padding: 5px 0 0 2px;
    font-size: 15px;
    border-bottom: 1px solid #dcdcdc;
}

.prop-row{
    position: relative;
    display: flex;
    align-items: center;
    gap: 13px;
    height: 38px;
    padding-left: 5px;
}

.select{
    position: relative;
    width: 142px;
    height: 20px;
}

.select select{
    appearance: none;
    width: 100%;
    height: 100%;
    padding: 0 2px;
    line-height: 18px;
    border: 1px solid #a4a8b2;
    border-radius: 2px;
    background: #fff;
}

.select svg{
    position: absolute;
    right: 6px;
    top: 8px;
    width: 6px;
    height: 5px;
    color: #000;
}

.marker{
    position: absolute;
    left: -25px;
    top: -6px;
    width: 256px;
    height: 46px;
    border: 2px solid #f00;
    box-shadow: 2px 2px 4px rgba(0, 0, 0, 0.4), inset 2px 2px 4px rgba(0, 0, 0, 0.3);
}
```
